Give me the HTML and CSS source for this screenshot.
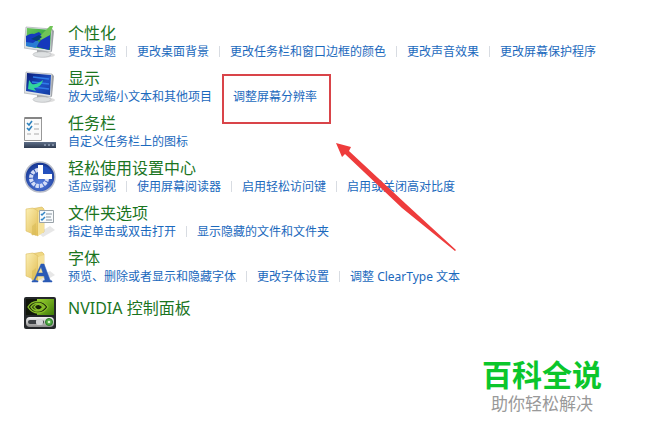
FILE: index.html
```html
<!DOCTYPE html>
<html lang="zh-CN">
<head>
<meta charset="utf-8">
<title>外观和个性化</title>
<link rel="stylesheet" href="styles.css">
</head>
<body>
<svg class="defs" width="0" height="0" aria-hidden="true">
  <defs>
    <linearGradient id="blue" x1="0" y1="0" x2="1" y2="1"><stop offset="0" stop-color="#0a1c78"/><stop offset=".6" stop-color="#1c4fc4"/><stop offset="1" stop-color="#123a9c"/></linearGradient>
    <linearGradient id="green" x1="0" y1="0" x2="1" y2="1"><stop offset="0" stop-color="#6cc75c"/><stop offset="1" stop-color="#0b8b32"/></linearGradient>
    <linearGradient id="folder" x1="0" y1="0" x2="1" y2="1"><stop offset="0" stop-color="#fbefb4"/><stop offset="1" stop-color="#e2bd52"/></linearGradient>
    <linearGradient id="bar" x1="0" y1="0" x2="0" y2="1"><stop offset="0" stop-color="#5e6f88"/><stop offset="1" stop-color="#303c51"/></linearGradient>
    <radialGradient id="orb" cx=".5" cy=".7" r=".7"><stop offset="0" stop-color="#557ee0"/><stop offset="1" stop-color="#12328f"/></radialGradient>
    <linearGradient id="lime" x1="0" y1="0" x2="1" y2="1"><stop offset="0" stop-color="#9bd332"/><stop offset="1" stop-color="#3f7c08"/></linearGradient>
    <linearGradient id="silver" x1="0" y1="0" x2="0" y2="1"><stop offset="0" stop-color="#f3f3f3"/><stop offset="1" stop-color="#8d8d8d"/></linearGradient>
    <g id="monitor">
      <ellipse cx="21" cy="29" rx="10" ry="2.500" fill="#dedede"/>
      <path d="M13 23l10 1 1 4-11 1z" fill="#a5a8aa"/>
      <ellipse cx="18" cy="28.500" rx="9" ry="2.800" fill="#dde0e1" stroke="#b3b6b8" stroke-width=".6"/>
      <path d="M2 1l26 2-1 23L0 22z" fill="#dfe3e6" stroke="#a9adb2" stroke-width=".7"/>
      <path d="M28 3l2 2-2 20-1 1z" fill="#9ca0a5"/>
    </g>
    <g id="folder-shape">
      <path d="M14 27l12-7 5 4-12 7z" fill="#ddd" opacity=".7"/>
      <path d="M7 3l11-2 2 2v23L8 29z" fill="#efd781" stroke="#d7b65a" stroke-width=".6"/>
      <path d="M2 3l7-1 5 3v25L2 25z" fill="url(#folder)" stroke="#dcbd61" stroke-width=".6"/>
      <path d="M14 6l6-2v22l-6 4z" fill="#f5e29a"/>
      <path d="M8 20v8l4 2V17z" fill="#d7b956" opacity=".55"/>
    </g>
  </defs>
</svg>
<main class="panel">
  <ul class="items">
    <li class="item">
      <svg class="icon" viewBox="0 0 32 32" aria-hidden="true">
        <use href="#monitor"/>
        <path d="M3 2l24 2-1 20L2 20z" fill="url(#green)"/>
        <path d="M2 10c3-1 4-3 8-2l5-2 5 5 6-2v11l-1 4-12-3c0-3 3-5 4-7-4-1-6 3-10 5-2 0-4 0-5-2z" fill="#1539bd"/>
        <path d="M2 16l7 1 4-3 2 2-3 6-10-2z" fill="#287bd4"/>
        <path d="M26 0h3l-3 9-9 5-3-2z" fill="#70c457"/>
        <path d="M7 13l8-4 3 2-5 4z" fill="#063d78"/>
      </svg>
      <div class="text">
        <h2>个性化</h2>
        <nav class="links"><a href="#">更改主题</a><a href="#">更改桌面背景</a><a href="#">更改任务栏和窗口边框的颜色</a><a href="#">更改声音效果</a><a href="#">更改屏幕保护程序</a></nav>
      </div>
    </li>
    <li class="item">
      <svg class="icon" viewBox="0 0 32 32" aria-hidden="true">
        <use href="#monitor"/>
        <path d="M3 2l24 2-1 20L2 20z" fill="url(#blue)"/>
        <path d="M9 6l16 2M8 11l17 2M9 16l16 2" stroke="#317ce8" stroke-width="1.500"/>
        <path d="M4 18l1-9 3 4c5 1 8-2 11-4-1 5-5 8-9 8l2 3z" fill="#32d49b"/>
      </svg>
      <div class="text">
        <h2>显示</h2>
        <nav class="links"><a href="#">放大或缩小文本和其他项目</a><a class="marked" href="#">调整屏幕分辨率</a></nav>
      </div>
    </li>
    <li class="item">
      <svg class="icon" viewBox="0 0 32 32" aria-hidden="true">
        <path d="M.5 1.500h17v23H.5z" fill="#fafafa" stroke="#989898"/>
        <path d="M1 1h17v2H1z" fill="#858585"/>
        <path d="M3 7l2 2 3-4M3 12l2 2 3-4" fill="none" stroke="#2d81bd" stroke-width="1.600"/>
        <path d="M10 8h5M10 13h5M10 18h5M3 18h4" stroke="#aaa"/>
        <path d="M0 26h32v6H0z" fill="url(#bar)"/>
        <path d="M20 28h2v2h-2zM24 28h2v2h-2zM28 28h2v2h-2z" fill="#7f8da4"/>
      </svg>
      <div class="text">
        <h2>任务栏</h2>
        <nav class="links"><a href="#">自定义任务栏上的图标</a></nav>
      </div>
    </li>
    <li class="item">
      <svg class="icon" viewBox="0 0 32 32" aria-hidden="true">
        <circle cx="16" cy="16" r="15" fill="url(#orb)" stroke="#b9bdc9" stroke-width="1.500"/>
        <circle cx="15" cy="17" r="8" fill="none" stroke="#d5def7" stroke-width="4" stroke-dasharray="3.200 1"/>
        <path d="M14 4h5v9h9v5H14z" fill="#fff"/>
        <path d="M19 5c5 1 8 4 9 8h-9z" fill="#2350bd"/>
      </svg>
      <div class="text">
        <h2>轻松使用设置中心</h2>
        <nav class="links"><a href="#">适应弱视</a><a href="#">使用屏幕阅读器</a><a href="#">启用轻松访问键</a><a href="#">启用或关闭高对比度</a></nav>
      </div>
    </li>
    <li class="item">
      <svg class="icon" viewBox="0 0 32 32" aria-hidden="true">
        <use href="#folder-shape"/>
        <path d="M15.500 4.500h14v12h-14z" fill="#f8fbfd" stroke="#9aa3a9"/>
        <path d="M17 8l1 1 3-3M17 13l1 1 3-3" fill="none" stroke="#3385c5" stroke-width="1.500"/>
        <path d="M22 8h6M22 11h5M22 14h6" stroke="#86939e"/>
      </svg>
      <div class="text">
        <h2>文件夹选项</h2>
        <nav class="links"><a href="#">指定单击或双击打开</a><a href="#">显示隐藏的文件和文件夹</a></nav>
      </div>
    </li>
    <li class="item">
      <svg class="icon" viewBox="0 0 32 32" aria-hidden="true">
        <use href="#folder-shape"/>
        <path d="M8 31v-1l2-1 7-16h3l6 16 2 1v1h-9v-1l2-1-1-4h-7l-2 4 3 1v1zM14 22h5l-2-6z" fill="#2a5ab5" fill-rule="evenodd" stroke="#2a5ab5" stroke-width=".5"/>
      </svg>
      <div class="text">
        <h2>字体</h2>
        <nav class="links"><a href="#">预览、删除或者显示和隐藏字体</a><a href="#">更改字体设置</a><a href="#">调整 ClearType 文本</a></nav>
      </div>
    </li>
    <li class="item single">
      <svg class="icon" viewBox="0 0 32 32" aria-hidden="true">
        <rect width="32" height="32" rx="2" fill="#24272a"/>
        <path d="M2 2h28v16H2z" fill="#11160b"/>
        <path d="M13 2h17v16H13z" fill="url(#lime)"/>
        <path d="M4 10c4-7 15-8 20 0-5 8-15 8-20 0z" fill="#172008"/>
        <path d="M4 10c4-7 15-8 20 0-5 8-15 8-20 0zM7 10c4 6 10 5 14 0-4-5-10-5-14 0zM10 10c3-4 6-3 9 0-3 4-6 4-9 0z" fill="none" stroke="#86bd28" stroke-width="1.400"/>
        <rect x="2" y="20" width="28" height="10" rx="4" fill="url(#silver)"/>
        <rect x="4" y="23" width="16" height="4" rx="2" fill="#3d4145"/>
        <rect x="12" y="22" width="7" height="6" rx="2" fill="#d0d2d4"/>
        <circle cx="25" cy="25" r="3.500" fill="#50a846" stroke="#2b7b27"/>
        <circle cx="25" cy="25" r="1.300" fill="#d7f5cb"/>
      </svg>
      <div class="text"><h2>NVIDIA 控制面板</h2></div>
    </li>
  </ul>
  <footer class="brand">
    <strong>百科全说</strong>
    <span>助你轻松解决</span>
  </footer>
  <svg class="arrow" viewBox="0 0 120 109" aria-hidden="true">
    <path d="M0 0L15 4 13 8 70 61 120 107 119 108 66 65 9 11 6 14z" fill="#ee3c3c"/>
  </svg>
</main>
</body>
</html>
```
FILE: styles.css
```css
*,
*::before {
  box-sizing: border-box;
}

body {
  margin: 0;
  background: #fff;
  font-family: "Noto Sans", "Noto Sans CJK SC", sans-serif;
}

.defs {
  position: absolute;
}

.panel {
  position: relative;
  display: flex;
  flex-direction: column;
  padding: 22px 24px 24px;
}

.items {
  display: flex;
  flex-direction: column;
  gap: 7px;
  margin: 0;
  padding: 0;
  list-style: none;
}

.item {
  display: flex;
  align-items: flex-start;
  gap: 12px;
}

.icon {
  flex: none;
  width: 32px;
  height: 32px;
  margin-top: 4px;
}

.single {
  padding-top: 5px;
}

.single .icon {
  margin-top: 0;
}

h2 {
  margin: 0;
  color: #1b751f;
  font-size: 16px;
  font-weight: 400;
  line-height: 22px;
}

.links {
  display: flex;
  font-size: 12px;
  line-height: 16px;
  white-space: nowrap;
}

.links a {
  position: relative;
  color: #1b69bd;
  text-decoration: none;
}

.links a + a {
  margin-left: 21px;
}

.links a + a::before {
  content: "";
  position: absolute;
  top: 2px;
  left: -11px;
  width: 1px;
  height: 11px;
  background: #d8dce2;
}

.links a.marked::before {
  top: -15px;
  left: -11px;
  right: -14px;
  width: auto;
  height: 50px;
  border: 2px solid #d94449;
  background: none;
}

.arrow {
  position: absolute;
  top: 143px;
  left: 336px;
  width: 120px;
}

.brand {
  display: flex;
  flex-direction: column;
  align-items: center;
  align-self: flex-end;
  margin: 27px 24px 0 0;
}

.brand strong {
  color: #0bc62b;
  font-size: 30px;
  font-weight: 700;
  line-height: 38px;
}

.brand span {
  color: #999;
  font-size: 17px;
  line-height: 20px;
}
```
